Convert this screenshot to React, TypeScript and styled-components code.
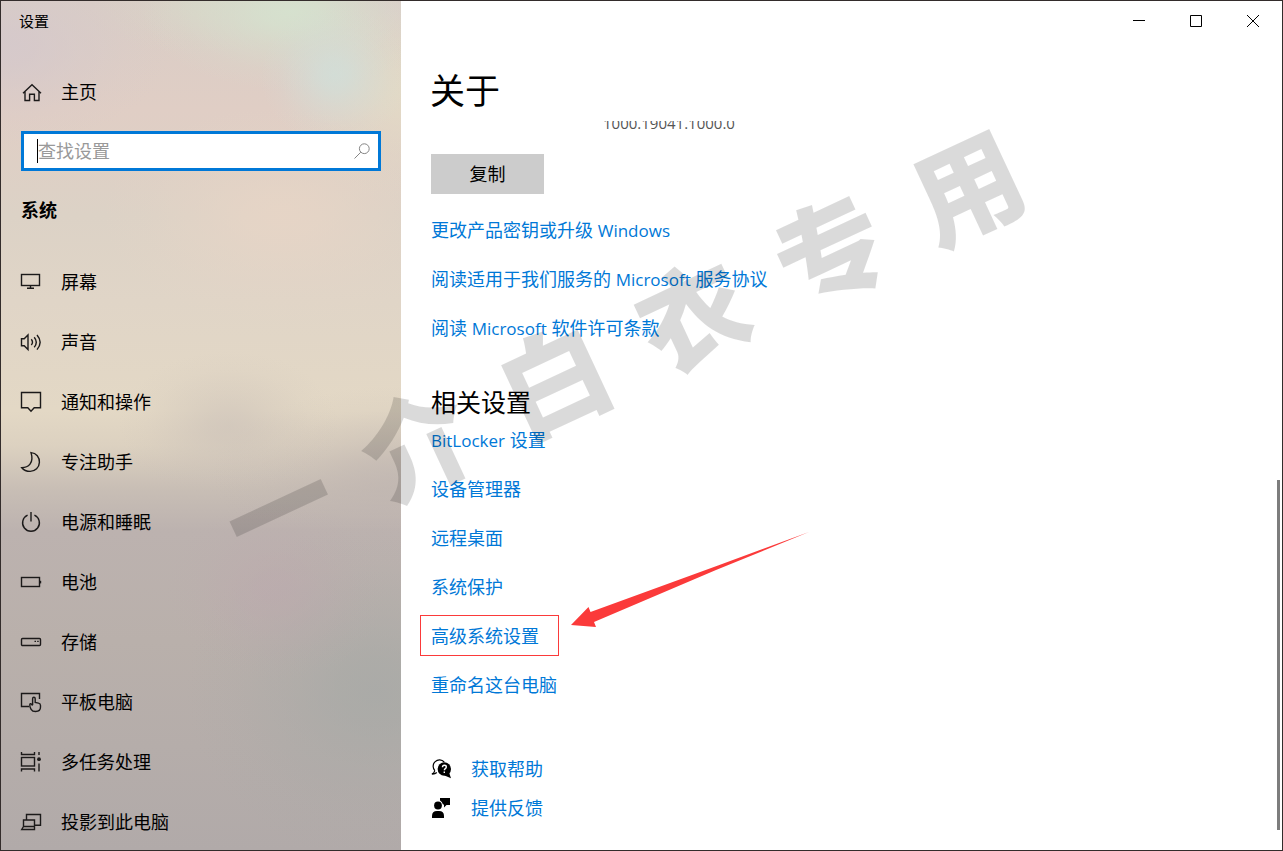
import React from 'react';
import styled, { createGlobalStyle } from 'styled-components';

const accent = '#0078d7';

const GlobalStyle = createGlobalStyle`
  * { box-sizing: border-box; }
  body {
    margin: 0;
    font-family: 'Open Sans', 'Noto Sans CJK SC', sans-serif;
    font-size: 18px;
    line-height: 24px;
    color: #000;
  }
  ul { list-style: none; margin: 0; padding: 0; }
  h1, h2, p { margin: 0; font-weight: 400; }
`;

const Window = styled.div`
  position: relative;
  display: flex;
  height: 100vh;
  min-height: 851px;
  overflow: hidden;
  border: 1px solid #332c2b;
  background: #fff;
`;

/* A soft spot of light whose edge fades out without a visible rim. */
const glow = (x: number, y: number, rx: number, ry: number, rgb: string, peak: number) =>
  `radial-gradient(ellipse ${rx}px ${ry}px at ${x}px ${y}px,
    rgba(${rgb}, ${peak}) 0%,
    rgba(${rgb}, ${peak * 0.85}) 20%,
    rgba(${rgb}, ${peak * 0.5}) 45%,
    rgba(${rgb}, ${peak * 0.15}) 75%,
    rgba(${rgb}, 0) 100%)`;

const Sidebar = styled.aside`
  flex: 0 0 400px;
  display: flex;
  flex-direction: column;
  background:
    ${glow(334, 74, 75, 70, '208, 223, 218', 0.8)},
    ${glow(290, 10, 150, 80, '213, 227, 207', 0.9)},
    ${glow(200, 5, 110, 50, '216, 216, 200', 0.6)},
    ${glow(400, 90, 120, 110, '227, 220, 198', 0.8)},
    ${glow(400, 0, 80, 60, '218, 204, 202', 0.8)},
    ${glow(280, 215, 180, 110, '232, 213, 198', 0.8)},
    ${glow(0, 45, 170, 100, '212, 200, 204', 0.8)},
    ${glow(228, 425, 110, 75, '198, 188, 182', 0.5)},
    ${glow(400, 475, 190, 90, '188, 178, 175', 0.6)},
    ${glow(275, 590, 110, 90, '189, 168, 174', 0.5)},
    ${glow(375, 690, 190, 170, '165, 169, 166', 0.7)},
    linear-gradient(
      180deg,
      #d9cdc6 0px,
      #e0cec5 110px,
      #dcd2c6 215px,
      #e0d5c7 300px,
      #e3d8c5 410px,
      #dcd1c0 445px,
      #c8beb5 488px,
      #bcb2af 530px,
      #b9b0ab 640px,
      #b1aaa9 850px
    );

  & > * { flex-shrink: 0; }
`;

const AppTitle = styled.div`
  padding: 8px 18px 0;
  height: 61px;
  font-size: 15px;
`;

const NavLink = styled.a`
  display: flex;
  align-items: center;
  gap: 19px;
  height: 60px;
  padding: 0 19px;
  color: #000;
  text-decoration: none;
`;

const SearchBox = styled.label`
  display: flex;
  align-items: center;
  height: 40px;
  margin: 9px 20px 27px;
  padding: 0 8px 0 13px;
  border: 3px solid ${accent};
  background: #fff;
`;

const Caret = styled.span`
  flex: none;
  width: 1px;
  height: 24px;
  background: #000;
`;

const SearchInput = styled.input`
  flex: 1;
  min-width: 0;
  height: 32px;
  padding: 0;
  border: 0;
  outline: 0;
  background: transparent;
  font: inherit;
  color: #000;
  &::placeholder { color: #999; opacity: 1; }
`;

const SectionName = styled.h2`
  padding: 0 20px;
  margin-bottom: 30px;
  font-size: 18px;
  font-weight: 700;
`;

const Main = styled.main`
  flex: 1;
  min-width: 0;
  display: flex;
  flex-direction: column;
`;

const TitleBar = styled.div`
  display: flex;
  justify-content: flex-end;
  height: 40px;
  padding-right: 1px;
`;

const WindowButton = styled.button`
  display: flex;
  align-items: center;
  justify-content: center;
  width: 57px;
  padding: 0;
  border: 0;
  background: transparent;
`;

const PageTitle = styled.h1`
  padding: 26px 29px 0;
  height: 80px;
  font-size: 35px;
  line-height: 48px;
`;

const ScrollArea = styled.div`
  flex: 1;
  min-height: 0;
  display: flex;
  justify-content: space-between;
`;

const Content = styled.div`
  flex: 1;
  padding-left: 30px;
`;

const SpecRow = styled.div`
  display: flex;
  align-items: flex-end;
  height: 14px;
  overflow: hidden;
  padding-left: 172px;
  margin-bottom: 19px;
  font-size: 15px;
  line-height: 24px;
  color: #555;
`;

const CopyButton = styled.button`
  display: block;
  width: 113px;
  height: 40px;
  margin-bottom: 11px;
  padding: 0;
  border: 0;
  background: #ccc;
  font: inherit;
  color: #000;
`;

const LinkRow = styled.li`
  position: relative;
  display: flex;
  align-items: center;
  height: 49px;
`;

const TextLink = styled.a`
  color: ${accent};
  text-decoration: none;
`;

const Latin = styled.span`
  font-size: 17px;
  line-height: 17px;
`;

const RelatedTitle = styled.h2`
  margin-top: 33px;
  height: 30px;
  font-size: 25px;
  line-height: 34px;
`;

const SupportList = styled.ul`
  margin-top: 40px;
`;

const SupportRow = styled.li`
  display: flex;
  align-items: center;
  gap: 18px;
  height: 39px;
`;

const HighlightBox = styled.span`
  position: absolute;
  top: 4px;
  left: -11px;
  width: 139px;
  height: 41px;
  border: 1px solid #fb3a3a;
  pointer-events: none;
`;

const Arrow = styled.svg`
  position: absolute;
  left: 140px;
  bottom: 32px;
  pointer-events: none;
`;

const ScrollTrack = styled.div`
  display: flex;
  flex-direction: column;
  justify-content: flex-end;
  padding: 0 2px;
`;

const ScrollThumb = styled.div`
  width: 3px;
  height: 48%;
  margin-bottom: 20px;
  background: #7d7d7d;
`;

const Watermark = styled.div`
  position: absolute;
  top: 342px;
  left: 620px;
  display: flex;
  gap: 44px;
  transform: translate(-50%, -50%) rotate(-25deg);
  font-family: 'Noto Sans CJK SC', sans-serif;
  font-size: 108px;
  font-weight: 900;
  line-height: 108px;
  color: rgba(0, 0, 0, 0.145);
  white-space: nowrap;
  pointer-events: none;
  user-select: none;
`;

const LineIcon = styled.svg`
  flex: none;
  display: block;
  width: 22px;
  height: 22px;
  fill: none;
  stroke: #1c1a1a;
  stroke-width: 1.4;
`;

const Icon = ({ children }: { children: React.ReactNode }) => (
  <LineIcon viewBox="0 0 22 22" aria-hidden="true">{children}</LineIcon>
);

const navItems = [
  { label: '屏幕', icon: <><rect x="1.5" y="3.5" width="18" height="11" /><path d="M10.5 14.5v2.5M7 17.3h7" /></> },
  { label: '声音', icon: <><path d="M1.5 7.8h2.7L8 4v14.5l-3.8-3.8H1.5z" /><path d="M11.3 8.3q2.4 2.8 0 5.7M14.2 6.2q4.2 5 0 10M17 4q6.3 7.2 0 14.6" /></> },
  { label: '通知和操作', icon: <path d="M1.5 1.5h19v15.3h-6.3l-3.2 3.4-3.2-3.4H1.5z" /> },
  { label: '专注助手', icon: <path d="M11 1.6C16.4 2 19.6 6.4 19.4 11.4C19.2 16.6 15.2 20.4 10.2 20.4C6.6 20.4 3.6 19 1.8 16.7C8 16.6 14.4 12.2 11 1.6z" /> },
  { label: '电源和睡眠', icon: <path d="M7.6 4.2a8.4 8.4 0 1 0 6.8 0M11 1v9.6" /> },
  { label: '电池', icon: <><rect x="1.5" y="6.5" width="18" height="9" /><path d="M20.5 9.8v2.6" /></> },
  { label: '存储', icon: <><rect x="1.5" y="7.5" width="19" height="7" rx="1" /><path d="M14.5 10.4h1.5M17.2 10.4h1.5" /></> },
  { label: '平板电脑', icon: <><path d="M9 15.5H1.5v-13h18v5.5" /><path d="M12.6 14V7.8q0-1.5 1.3-1.5t1.3 1.5v3.7l3.3.6q2 .4 2 2.3v1.600q0 4.500-4.900 4.500q-3.200 0-4.500-2.200q-1.600-2.600-1.300-4.600q.4-1.600 1.500-.7l1.300 1.400" /></> },
  { label: '多任务处理', icon: <><path d="M1.5 1v2.5h13V1M1.5 20.5V18h13v2.5M19 1v3M19 12.5v8" /><rect x="1.5" y="6.5" width="13" height="8.5" /><circle cx="19" cy="8.2" r="1.9" fill="#1c1a1a" stroke="none" /></> },
  { label: '投影到此电脑', icon: <><path d="M6.5 9V3.5h14v10.7h-6" /><path d="M3.5 15.5V9h11v6.5zL1.7 18.500h12.800v-3" /></> },
];

const licenseLinks = [
  { key: 'key', text: <>更改产品密钥或升级 <Latin>Windows</Latin></> },
  { key: 'services', text: <>阅读适用于我们服务的 <Latin>Microsoft</Latin> 服务协议</> },
  { key: 'terms', text: <>阅读 <Latin>Microsoft</Latin> 软件许可条款</> },
];

const relatedLinks = [
  { key: 'bitlocker', text: <><Latin>BitLocker</Latin> 设置</> },
  { key: 'devices', text: '设备管理器' },
  { key: 'remote', text: '远程桌面' },
  { key: 'protection', text: '系统保护' },
  { key: 'advanced', text: '高级系统设置', highlighted: true },
  { key: 'rename', text: '重命名这台电脑' },
];

const App = () => (
  <>
    <GlobalStyle />
    <Window>
      <Sidebar>
        <AppTitle>设置</AppTitle>
        <NavLink href="#home">
          <Icon><path d="M3 12.2L12 3.8l9 8.4M5 10.8v8.7h4.6v-6.3h4.8v6.3H19v-8.7" /></Icon>
          主页
        </NavLink>
        <SearchBox>
          <Caret />
          <SearchInput type="text" placeholder="查找设置" aria-label="查找设置" />
          <svg width="16" height="16" viewBox="0 0 16 16" fill="none" stroke="#858585" aria-hidden="true">
            <circle cx="10.3" cy="5.7" r="4.9" />
            <path d="M6.8 9.2L.5 15.5" />
          </svg>
        </SearchBox>
        <SectionName>系统</SectionName>
        <nav>
          <ul>
            {navItems.map(({ label, icon }) => (
              <li key={label}>
                <NavLink href="#settings"><Icon>{icon}</Icon>{label}</NavLink>
              </li>
            ))}
          </ul>
        </nav>
      </Sidebar>
      <Main>
        <TitleBar>
          <WindowButton aria-label="最小化">
            <svg width="12" height="12" stroke="#000"><path d="M0 5.5h12" /></svg>
          </WindowButton>
          <WindowButton aria-label="最大化">
            <svg width="12" height="12" fill="none" stroke="#000"><path d="M.5.5h11v11H.5z" /></svg>
          </WindowButton>
          <WindowButton aria-label="关闭">
            <svg width="12" height="12" stroke="#000"><path d="M0 0l12 12M12 0L0 12" /></svg>
          </WindowButton>
        </TitleBar>
        <PageTitle>关于</PageTitle>
        <ScrollArea>
          <Content>
            <SpecRow>1000.19041.1000.0</SpecRow>
            <CopyButton>复制</CopyButton>
            <ul>
              {licenseLinks.map(({ key, text }) => (
                <LinkRow key={key}><TextLink href="#license">{text}</TextLink></LinkRow>
              ))}
            </ul>
            <RelatedTitle>相关设置</RelatedTitle>
            <ul>
              {relatedLinks.map(({ key, text, highlighted }) => (
                <LinkRow key={key}>
                  <TextLink href="#related">{text}</TextLink>
                  {highlighted && (
                    <>
                      <HighlightBox />
                      <Arrow width="240" height="97" viewBox="0 0 240 97" aria-hidden="true">
                        <path d="M0 94L17.5 76l2 5L147 34.5L238 1L145 39L23 91l2 5z" fill="#fb3a3a" />
                      </Arrow>
                    </>
                  )}
                </LinkRow>
              ))}
            </ul>
            <SupportList>
              <SupportRow>
                <svg width="22" height="22" viewBox="0 0 22 22" aria-hidden="true">
                  <path d="M3.8 12.6A6.3 6.3 0 1 1 13.2 4M.8 16q2.4-.8 3-3.4M.8 16q3 .3 5-1.5" fill="none" stroke="#000" strokeWidth="1.2" />
                  <circle cx="13.3" cy="11" r="6.7" />
                  <path d="M13.5 17.5l6.5 2.8-2-6z" />
                  <path d="M11.5 9.2q0-2 1.900-2t1.900 1.700q0 1-1 1.700t-.9 1.700M13.3 13.5v1.500" fill="none" stroke="#fff" strokeWidth="1.4" />
                </svg>
                <TextLink href="#help">获取帮助</TextLink>
              </SupportRow>
              <SupportRow>
                <svg width="22" height="22" viewBox="0 0 22 22" aria-hidden="true">
                  <circle cx="7" cy="8.5" r="3.9" />
                  <path d="M1 21v-2q0-5 5-5h2q5 0 5 5v2zM9 1h10v7h-3.5L13 10.5V7.5H12Q11 4.5 9 3.5z" />
                </svg>
                <TextLink href="#feedback">提供反馈</TextLink>
              </SupportRow>
            </SupportList>
          </Content>
          <ScrollTrack><ScrollThumb /></ScrollTrack>
        </ScrollArea>
      </Main>
      <Watermark aria-hidden="true">
        {[...'一介白衣专用'].map((char) => <span key={char}>{char}</span>)}
      </Watermark>
    </Window>
  </>
);

export default App;
